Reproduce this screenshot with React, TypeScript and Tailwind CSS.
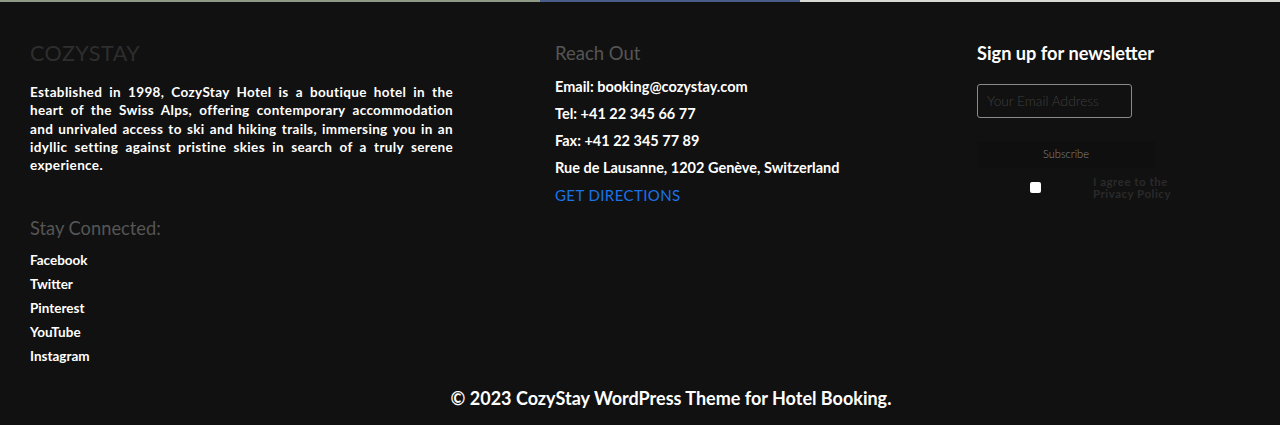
const socials = ["Facebook", "Twitter", "Pinterest", "YouTube", "Instagram"];

const contacts = [
    "Email: booking@cozystay.com",
    "Tel: +41 22 345 66 77",
    "Fax: +41 22 345 77 89",
    "Rue de Lausanne, 1202 Genève, Switzerland",
];

export default function App() {
    return (
        <div className="h-[425px] w-[1280px] overflow-hidden bg-[#111111] font-['Lato',sans-serif] text-white">
            {/* strip of the hero image above */}
            <div className="flex h-[2px]">
                <div className="w-[540px] bg-[#8f9a86]" />
                <div className="w-[260px] bg-[#4a5d8a]" />
                <div className="flex-1 bg-[#d8d8d4]" />
            </div>

            <div className="flex px-[30px] pt-[38px]">
                <div className="w-[423px]">
                    <div className="text-[21.5px] leading-[26px] tracking-[0.5px] text-[#2e2e2e]">COZYSTAY</div>
                    <p className="mt-[17px] text-justify text-[13.5px] font-bold leading-[18.3px] tracking-[0.35px]">
                        Established in 1998, CozyStay Hotel is a boutique hotel in the heart of the Swiss Alps,
                        offering contemporary accommodation and unrivaled access to ski and hiking trails,
                        immersing you in an idyllic setting against pristine skies in search of a truly serene
                        experience.
                    </p>
                    <div className="mt-[43px] text-[18.3px] leading-[22px] text-[#555555]">Stay Connected:</div>
                    <ul className="mt-[13px] flex flex-col gap-[7px] text-[13.5px] font-bold leading-[17px]">
                        {socials.map((s) => (
                            <li key={s}>{s}</li>
                        ))}
                    </ul>
                </div>

                <div className="ml-[102px] w-[380px] pt-[2px]">
                    <div className="text-[18.5px] leading-[22px] text-[#555555]">Reach Out</div>
                    <ul className="mt-[14px] flex flex-col gap-[9px] text-[14.5px] font-bold leading-[18px]">
                        {contacts.map((c) => (
                            <li key={c}>{c}</li>
                        ))}
                        <li className="text-[15px] font-normal tracking-[0.4px] text-[#1a73e8]">GET DIRECTIONS</li>
                    </ul>
                </div>

                <div className="ml-[42px] w-[250px] pt-[2px]">
                    <div className="text-[18.2px] font-bold leading-[22px]">Sign up for newsletter</div>
                    <div className="mt-[20px] flex h-[34px] w-[155px] items-center rounded-[3px] border border-[#8a8a8a] px-[9px] text-[13.7px] font-light text-[#3e3e3e]">
                        Your Email Address
                    </div>
                    <div className="mt-[23px] flex h-[27px] w-[178px] items-center justify-center bg-[#0f0f0f] text-[11px] font-light text-[#8a8a8a]">
                        Subscribe
                    </div>
                    <div className="mt-[8px] flex items-start">
                        <div className="ml-[53px] mt-[6px] h-[11px] w-[11px] rounded-[2px] bg-white" />
                        <div className="ml-[52px] text-[11.5px] font-bold leading-[12px] tracking-[0.5px] text-[#2a2a2a]">
                            <div>I agree to the</div>
                            <div>Privacy Policy</div>
                        </div>
                    </div>
                </div>
            </div>

            <div className="mt-[22px] pl-[62px] text-center text-[18px] font-bold leading-[22px]">
                © 2023 CozyStay WordPress Theme for Hotel Booking.
            </div>
        </div>
    );
}
